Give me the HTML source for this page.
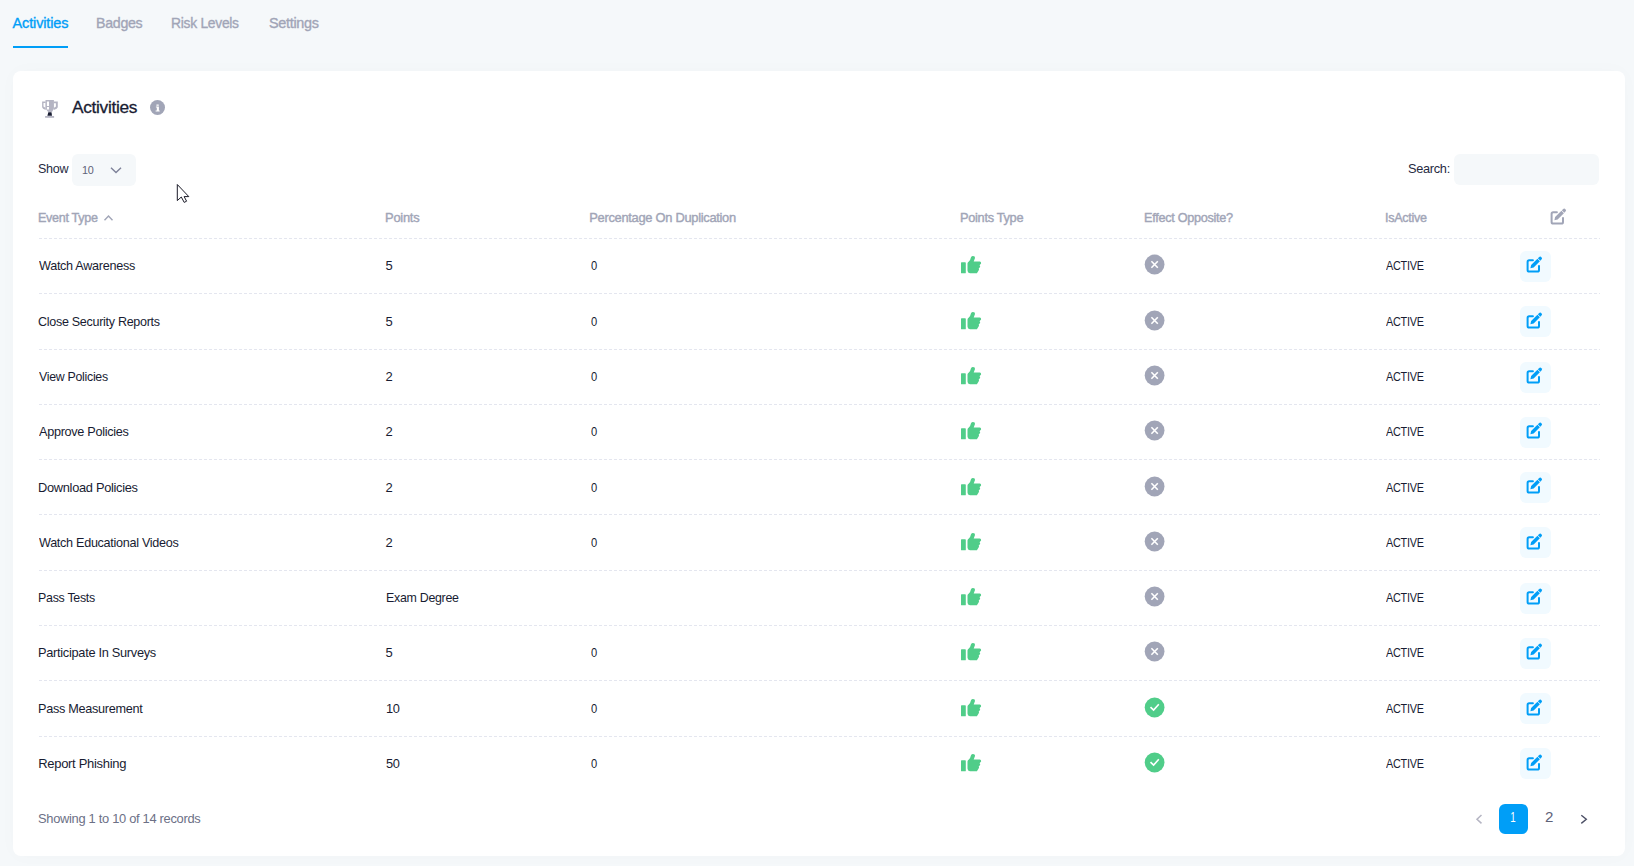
<!DOCTYPE html><html><head><meta charset="utf-8"><style>
html,body{margin:0;padding:0}
body{width:1634px;height:866px;background:#f5f8fa;position:relative;overflow:hidden;font-family:"Liberation Sans",sans-serif}
.t{position:absolute;white-space:pre;font-family:"Liberation Sans",sans-serif}
.a{position:absolute;display:block}
.card{position:absolute;left:13px;top:71px;width:1612px;height:785px;background:#fff;border-radius:8px;box-shadow:0 0 20px 0 rgba(76,87,125,0.02)}
.dash{position:absolute;left:39px;width:1561px;height:1px;background-image:linear-gradient(to right,#e4e6ef 0,#e4e6ef 3px,transparent 3px,transparent 5px);background-size:5px 1px}
.ebtn{position:absolute;width:31px;height:31px;background:#f1faff;border-radius:6px}
</style></head><body>
<div class="a" style="left:13px;top:46px;width:55px;height:2px;background:#009ef7"></div>
<div class="card"></div>
<svg class="a" style="left:38px;top:96px" width="24" height="24" viewBox="0 0 24 24">
<path fill="#b5b5c3" fill-rule="evenodd" d="M7.5 4.1 H15.9 V12.4 L14 15.9 H10.1 L7.5 12.4 Z M8.9 5.5 V9.9 H11 V5.5 Z M8.9 11 V13.5 H11 V11 Z"/>
<path fill="#b5b5c3" fill-rule="evenodd" d="M7.7 5.5 H4.1 V11.2 Q4.3 12.6 7.7 14 Z M5.5 7.1 H7.5 V11.7 Q5.7 11 5.5 10.5 Z"/>
<path fill="#b5b5c3" fill-rule="evenodd" d="M15.7 5.5 H19.8 V11.2 Q19.6 12.6 15.7 14 Z M15.9 7.3 H17.9 V10.5 Q17.7 11 15.9 11.7 Z"/>
<path fill="#181c32" d="M10.3 16.2 H13.5 L14 19.8 H9.4 Z"/>
<rect fill="#b5b5c3" x="7.1" y="20" width="9" height="1.8"/>
</svg>
<svg class="a" style="left:150px;top:99.5px" width="15" height="15" viewBox="0 0 15 15">
<circle cx="7.5" cy="7.5" r="7.5" fill="#a1a5b7"/>
<rect x="6.4" y="4.4" width="2.4" height="1.4" rx="0.3" fill="#fff"/>
<path d="M5.9 6.6 H8.9 V10.6 H9.7 V11.6 H5.6 V10.6 H6.8 V7.6 H5.9 Z" fill="#fff"/>
</svg>
<div class="a" style="left:72px;top:154px;width:64px;height:32px;background:#f5f8fa;border-radius:6px"></div>
<svg class="a" style="left:0;top:0" width="200" height="230"><polyline points="111,167.8 116,172.6 121,167.8" fill="none" stroke="#7e8299" stroke-width="1.4"/><polyline points="104.5,220.2 108.5,216 112.5,220.2" fill="none" stroke="#a1a5b7" stroke-width="1.4"/></svg>
<div class="a" style="left:1454px;top:154px;width:145px;height:31px;background:#f5f8fa;border-radius:6px"></div>
<svg class="a" style="left:1549.6px;top:208.6px;overflow:visible" width="17" height="17" viewBox="0 0 17 17">
<path d="M6.9 3.3 H3.2 Q1.6 3.3 1.6 4.9 V13 Q1.6 14.6 3.2 14.6 H11.4 Q13 14.6 13 13 V9" fill="none" stroke="#a1a5b7" stroke-width="2" stroke-linecap="round"/>
<path d="M4.4 11.2 L5.13 7.99 L11.42 1.7 L13.9 4.18 L7.61 10.47 Z" fill="#a1a5b7"/>
<path d="M11.84 1.28 L12.98 0.14 A1.75 1.75 0 0 1 15.46 2.62 L14.32 3.76 Z" fill="#a1a5b7"/>
</svg>
<div class="dash" style="top:238px"></div>
<div class="dash" style="top:293px"></div>
<div class="dash" style="top:349px"></div>
<div class="dash" style="top:404px"></div>
<div class="dash" style="top:459px"></div>
<div class="dash" style="top:514px"></div>
<div class="dash" style="top:570px"></div>
<div class="dash" style="top:625px"></div>
<div class="dash" style="top:680px"></div>
<div class="dash" style="top:736px"></div>
<svg class="a" style="left:961px;top:255.70px" width="21" height="18" viewBox="0 0 21 18">
<rect x="0" y="6.3" width="4.8" height="11" rx="0.6" fill="#50cd89"/>
<path fill="#50cd89" d="M10 1.2 Q10.6 0 12 0 Q14.3 0 14 2 L12.7 5.4 L18.8 5.4 Q20.3 5.6 20.1 7.4 L18.5 9.3 Q19.4 10 19.1 10.9 L17.7 12.6 Q18.2 13.3 17.9 14 L15.9 17.3 L9 17.3 Q6.5 17.1 6.5 14.6 L6.5 7.6 Q6.6 6.6 7.6 5.8 Q9.4 4.3 10 1.2 Z"/>
</svg>
<svg class="a" style="left:1144px;top:253.80px" width="21" height="21" viewBox="0 0 21 21">
<circle cx="10.6" cy="10.5" r="9.9" fill="#a1a5b7"/>
<path d="M7.4 7.3 L13.8 13.7 M13.8 7.3 L7.4 13.7" fill="none" stroke="#fff" stroke-width="1.6"/>
</svg>
<div class="ebtn" style="left:1520px;top:250.60px"></div>
<svg class="a" style="left:1526px;top:257.1px;overflow:visible" width="17" height="17" viewBox="0 0 17 17">
<path d="M6.9 3.3 H3.2 Q1.6 3.3 1.6 4.9 V13 Q1.6 14.6 3.2 14.6 H11.4 Q13 14.6 13 13 V9" fill="none" stroke="#009ef7" stroke-width="2" stroke-linecap="round"/>
<path d="M4.4 11.2 L5.13 7.99 L11.42 1.7 L13.9 4.18 L7.61 10.47 Z" fill="#009ef7"/>
<path d="M11.84 1.28 L12.98 0.14 A1.75 1.75 0 0 1 15.46 2.62 L14.32 3.76 Z" fill="#009ef7"/>
</svg>
<svg class="a" style="left:961px;top:311.70px" width="21" height="18" viewBox="0 0 21 18">
<rect x="0" y="6.3" width="4.8" height="11" rx="0.6" fill="#50cd89"/>
<path fill="#50cd89" d="M10 1.2 Q10.6 0 12 0 Q14.3 0 14 2 L12.7 5.4 L18.8 5.4 Q20.3 5.6 20.1 7.4 L18.5 9.3 Q19.4 10 19.1 10.9 L17.7 12.6 Q18.2 13.3 17.9 14 L15.9 17.3 L9 17.3 Q6.5 17.1 6.5 14.6 L6.5 7.6 Q6.6 6.6 7.6 5.8 Q9.4 4.3 10 1.2 Z"/>
</svg>
<svg class="a" style="left:1144px;top:309.80px" width="21" height="21" viewBox="0 0 21 21">
<circle cx="10.6" cy="10.5" r="9.9" fill="#a1a5b7"/>
<path d="M7.4 7.3 L13.8 13.7 M13.8 7.3 L7.4 13.7" fill="none" stroke="#fff" stroke-width="1.6"/>
</svg>
<div class="ebtn" style="left:1520px;top:306.10px"></div>
<svg class="a" style="left:1526px;top:312.6px;overflow:visible" width="17" height="17" viewBox="0 0 17 17">
<path d="M6.9 3.3 H3.2 Q1.6 3.3 1.6 4.9 V13 Q1.6 14.6 3.2 14.6 H11.4 Q13 14.6 13 13 V9" fill="none" stroke="#009ef7" stroke-width="2" stroke-linecap="round"/>
<path d="M4.4 11.2 L5.13 7.99 L11.42 1.7 L13.9 4.18 L7.61 10.47 Z" fill="#009ef7"/>
<path d="M11.84 1.28 L12.98 0.14 A1.75 1.75 0 0 1 15.46 2.62 L14.32 3.76 Z" fill="#009ef7"/>
</svg>
<svg class="a" style="left:961px;top:366.70px" width="21" height="18" viewBox="0 0 21 18">
<rect x="0" y="6.3" width="4.8" height="11" rx="0.6" fill="#50cd89"/>
<path fill="#50cd89" d="M10 1.2 Q10.6 0 12 0 Q14.3 0 14 2 L12.7 5.4 L18.8 5.4 Q20.3 5.6 20.1 7.4 L18.5 9.3 Q19.4 10 19.1 10.9 L17.7 12.6 Q18.2 13.3 17.9 14 L15.9 17.3 L9 17.3 Q6.5 17.1 6.5 14.6 L6.5 7.6 Q6.6 6.6 7.6 5.8 Q9.4 4.3 10 1.2 Z"/>
</svg>
<svg class="a" style="left:1144px;top:364.80px" width="21" height="21" viewBox="0 0 21 21">
<circle cx="10.6" cy="10.5" r="9.9" fill="#a1a5b7"/>
<path d="M7.4 7.3 L13.8 13.7 M13.8 7.3 L7.4 13.7" fill="none" stroke="#fff" stroke-width="1.6"/>
</svg>
<div class="ebtn" style="left:1520px;top:361.60px"></div>
<svg class="a" style="left:1526px;top:368.1px;overflow:visible" width="17" height="17" viewBox="0 0 17 17">
<path d="M6.9 3.3 H3.2 Q1.6 3.3 1.6 4.9 V13 Q1.6 14.6 3.2 14.6 H11.4 Q13 14.6 13 13 V9" fill="none" stroke="#009ef7" stroke-width="2" stroke-linecap="round"/>
<path d="M4.4 11.2 L5.13 7.99 L11.42 1.7 L13.9 4.18 L7.61 10.47 Z" fill="#009ef7"/>
<path d="M11.84 1.28 L12.98 0.14 A1.75 1.75 0 0 1 15.46 2.62 L14.32 3.76 Z" fill="#009ef7"/>
</svg>
<svg class="a" style="left:961px;top:421.70px" width="21" height="18" viewBox="0 0 21 18">
<rect x="0" y="6.3" width="4.8" height="11" rx="0.6" fill="#50cd89"/>
<path fill="#50cd89" d="M10 1.2 Q10.6 0 12 0 Q14.3 0 14 2 L12.7 5.4 L18.8 5.4 Q20.3 5.6 20.1 7.4 L18.5 9.3 Q19.4 10 19.1 10.9 L17.7 12.6 Q18.2 13.3 17.9 14 L15.9 17.3 L9 17.3 Q6.5 17.1 6.5 14.6 L6.5 7.6 Q6.6 6.6 7.6 5.8 Q9.4 4.3 10 1.2 Z"/>
</svg>
<svg class="a" style="left:1144px;top:419.80px" width="21" height="21" viewBox="0 0 21 21">
<circle cx="10.6" cy="10.5" r="9.9" fill="#a1a5b7"/>
<path d="M7.4 7.3 L13.8 13.7 M13.8 7.3 L7.4 13.7" fill="none" stroke="#fff" stroke-width="1.6"/>
</svg>
<div class="ebtn" style="left:1520px;top:416.60px"></div>
<svg class="a" style="left:1526px;top:423.1px;overflow:visible" width="17" height="17" viewBox="0 0 17 17">
<path d="M6.9 3.3 H3.2 Q1.6 3.3 1.6 4.9 V13 Q1.6 14.6 3.2 14.6 H11.4 Q13 14.6 13 13 V9" fill="none" stroke="#009ef7" stroke-width="2" stroke-linecap="round"/>
<path d="M4.4 11.2 L5.13 7.99 L11.42 1.7 L13.9 4.18 L7.61 10.47 Z" fill="#009ef7"/>
<path d="M11.84 1.28 L12.98 0.14 A1.75 1.75 0 0 1 15.46 2.62 L14.32 3.76 Z" fill="#009ef7"/>
</svg>
<svg class="a" style="left:961px;top:477.70px" width="21" height="18" viewBox="0 0 21 18">
<rect x="0" y="6.3" width="4.8" height="11" rx="0.6" fill="#50cd89"/>
<path fill="#50cd89" d="M10 1.2 Q10.6 0 12 0 Q14.3 0 14 2 L12.7 5.4 L18.8 5.4 Q20.3 5.6 20.1 7.4 L18.5 9.3 Q19.4 10 19.1 10.9 L17.7 12.6 Q18.2 13.3 17.9 14 L15.9 17.3 L9 17.3 Q6.5 17.1 6.5 14.6 L6.5 7.6 Q6.6 6.6 7.6 5.8 Q9.4 4.3 10 1.2 Z"/>
</svg>
<svg class="a" style="left:1144px;top:475.80px" width="21" height="21" viewBox="0 0 21 21">
<circle cx="10.6" cy="10.5" r="9.9" fill="#a1a5b7"/>
<path d="M7.4 7.3 L13.8 13.7 M13.8 7.3 L7.4 13.7" fill="none" stroke="#fff" stroke-width="1.6"/>
</svg>
<div class="ebtn" style="left:1520px;top:471.60px"></div>
<svg class="a" style="left:1526px;top:478.1px;overflow:visible" width="17" height="17" viewBox="0 0 17 17">
<path d="M6.9 3.3 H3.2 Q1.6 3.3 1.6 4.9 V13 Q1.6 14.6 3.2 14.6 H11.4 Q13 14.6 13 13 V9" fill="none" stroke="#009ef7" stroke-width="2" stroke-linecap="round"/>
<path d="M4.4 11.2 L5.13 7.99 L11.42 1.7 L13.9 4.18 L7.61 10.47 Z" fill="#009ef7"/>
<path d="M11.84 1.28 L12.98 0.14 A1.75 1.75 0 0 1 15.46 2.62 L14.32 3.76 Z" fill="#009ef7"/>
</svg>
<svg class="a" style="left:961px;top:532.70px" width="21" height="18" viewBox="0 0 21 18">
<rect x="0" y="6.3" width="4.8" height="11" rx="0.6" fill="#50cd89"/>
<path fill="#50cd89" d="M10 1.2 Q10.6 0 12 0 Q14.3 0 14 2 L12.7 5.4 L18.8 5.4 Q20.3 5.6 20.1 7.4 L18.5 9.3 Q19.4 10 19.1 10.9 L17.7 12.6 Q18.2 13.3 17.9 14 L15.9 17.3 L9 17.3 Q6.5 17.1 6.5 14.6 L6.5 7.6 Q6.6 6.6 7.6 5.8 Q9.4 4.3 10 1.2 Z"/>
</svg>
<svg class="a" style="left:1144px;top:530.80px" width="21" height="21" viewBox="0 0 21 21">
<circle cx="10.6" cy="10.5" r="9.9" fill="#a1a5b7"/>
<path d="M7.4 7.3 L13.8 13.7 M13.8 7.3 L7.4 13.7" fill="none" stroke="#fff" stroke-width="1.6"/>
</svg>
<div class="ebtn" style="left:1520px;top:527.10px"></div>
<svg class="a" style="left:1526px;top:533.6px;overflow:visible" width="17" height="17" viewBox="0 0 17 17">
<path d="M6.9 3.3 H3.2 Q1.6 3.3 1.6 4.9 V13 Q1.6 14.6 3.2 14.6 H11.4 Q13 14.6 13 13 V9" fill="none" stroke="#009ef7" stroke-width="2" stroke-linecap="round"/>
<path d="M4.4 11.2 L5.13 7.99 L11.42 1.7 L13.9 4.18 L7.61 10.47 Z" fill="#009ef7"/>
<path d="M11.84 1.28 L12.98 0.14 A1.75 1.75 0 0 1 15.46 2.62 L14.32 3.76 Z" fill="#009ef7"/>
</svg>
<svg class="a" style="left:961px;top:587.70px" width="21" height="18" viewBox="0 0 21 18">
<rect x="0" y="6.3" width="4.8" height="11" rx="0.6" fill="#50cd89"/>
<path fill="#50cd89" d="M10 1.2 Q10.6 0 12 0 Q14.3 0 14 2 L12.7 5.4 L18.8 5.4 Q20.3 5.6 20.1 7.4 L18.5 9.3 Q19.4 10 19.1 10.9 L17.7 12.6 Q18.2 13.3 17.9 14 L15.9 17.3 L9 17.3 Q6.5 17.1 6.5 14.6 L6.5 7.6 Q6.6 6.6 7.6 5.8 Q9.4 4.3 10 1.2 Z"/>
</svg>
<svg class="a" style="left:1144px;top:585.80px" width="21" height="21" viewBox="0 0 21 21">
<circle cx="10.6" cy="10.5" r="9.9" fill="#a1a5b7"/>
<path d="M7.4 7.3 L13.8 13.7 M13.8 7.3 L7.4 13.7" fill="none" stroke="#fff" stroke-width="1.6"/>
</svg>
<div class="ebtn" style="left:1520px;top:582.60px"></div>
<svg class="a" style="left:1526px;top:589.1px;overflow:visible" width="17" height="17" viewBox="0 0 17 17">
<path d="M6.9 3.3 H3.2 Q1.6 3.3 1.6 4.9 V13 Q1.6 14.6 3.2 14.6 H11.4 Q13 14.6 13 13 V9" fill="none" stroke="#009ef7" stroke-width="2" stroke-linecap="round"/>
<path d="M4.4 11.2 L5.13 7.99 L11.42 1.7 L13.9 4.18 L7.61 10.47 Z" fill="#009ef7"/>
<path d="M11.84 1.28 L12.98 0.14 A1.75 1.75 0 0 1 15.46 2.62 L14.32 3.76 Z" fill="#009ef7"/>
</svg>
<svg class="a" style="left:961px;top:642.70px" width="21" height="18" viewBox="0 0 21 18">
<rect x="0" y="6.3" width="4.8" height="11" rx="0.6" fill="#50cd89"/>
<path fill="#50cd89" d="M10 1.2 Q10.6 0 12 0 Q14.3 0 14 2 L12.7 5.4 L18.8 5.4 Q20.3 5.6 20.1 7.4 L18.5 9.3 Q19.4 10 19.1 10.9 L17.7 12.6 Q18.2 13.3 17.9 14 L15.9 17.3 L9 17.3 Q6.5 17.1 6.5 14.6 L6.5 7.6 Q6.6 6.6 7.6 5.8 Q9.4 4.3 10 1.2 Z"/>
</svg>
<svg class="a" style="left:1144px;top:640.80px" width="21" height="21" viewBox="0 0 21 21">
<circle cx="10.6" cy="10.5" r="9.9" fill="#a1a5b7"/>
<path d="M7.4 7.3 L13.8 13.7 M13.8 7.3 L7.4 13.7" fill="none" stroke="#fff" stroke-width="1.6"/>
</svg>
<div class="ebtn" style="left:1520px;top:637.60px"></div>
<svg class="a" style="left:1526px;top:644.1px;overflow:visible" width="17" height="17" viewBox="0 0 17 17">
<path d="M6.9 3.3 H3.2 Q1.6 3.3 1.6 4.9 V13 Q1.6 14.6 3.2 14.6 H11.4 Q13 14.6 13 13 V9" fill="none" stroke="#009ef7" stroke-width="2" stroke-linecap="round"/>
<path d="M4.4 11.2 L5.13 7.99 L11.42 1.7 L13.9 4.18 L7.61 10.47 Z" fill="#009ef7"/>
<path d="M11.84 1.28 L12.98 0.14 A1.75 1.75 0 0 1 15.46 2.62 L14.32 3.76 Z" fill="#009ef7"/>
</svg>
<svg class="a" style="left:961px;top:698.70px" width="21" height="18" viewBox="0 0 21 18">
<rect x="0" y="6.3" width="4.8" height="11" rx="0.6" fill="#50cd89"/>
<path fill="#50cd89" d="M10 1.2 Q10.6 0 12 0 Q14.3 0 14 2 L12.7 5.4 L18.8 5.4 Q20.3 5.6 20.1 7.4 L18.5 9.3 Q19.4 10 19.1 10.9 L17.7 12.6 Q18.2 13.3 17.9 14 L15.9 17.3 L9 17.3 Q6.5 17.1 6.5 14.6 L6.5 7.6 Q6.6 6.6 7.6 5.8 Q9.4 4.3 10 1.2 Z"/>
</svg>
<svg class="a" style="left:1144px;top:696.80px" width="21" height="21" viewBox="0 0 21 21">
<circle cx="10.6" cy="10.5" r="9.9" fill="#50cd89"/>
<polyline points="6.5,10.1 9.6,13.1 14.8,7.3" fill="none" stroke="#fff" stroke-width="1.6"/>
</svg>
<div class="ebtn" style="left:1520px;top:693.10px"></div>
<svg class="a" style="left:1526px;top:699.6px;overflow:visible" width="17" height="17" viewBox="0 0 17 17">
<path d="M6.9 3.3 H3.2 Q1.6 3.3 1.6 4.9 V13 Q1.6 14.6 3.2 14.6 H11.4 Q13 14.6 13 13 V9" fill="none" stroke="#009ef7" stroke-width="2" stroke-linecap="round"/>
<path d="M4.4 11.2 L5.13 7.99 L11.42 1.7 L13.9 4.18 L7.61 10.47 Z" fill="#009ef7"/>
<path d="M11.84 1.28 L12.98 0.14 A1.75 1.75 0 0 1 15.46 2.62 L14.32 3.76 Z" fill="#009ef7"/>
</svg>
<svg class="a" style="left:961px;top:753.70px" width="21" height="18" viewBox="0 0 21 18">
<rect x="0" y="6.3" width="4.8" height="11" rx="0.6" fill="#50cd89"/>
<path fill="#50cd89" d="M10 1.2 Q10.6 0 12 0 Q14.3 0 14 2 L12.7 5.4 L18.8 5.4 Q20.3 5.6 20.1 7.4 L18.5 9.3 Q19.4 10 19.1 10.9 L17.7 12.6 Q18.2 13.3 17.9 14 L15.9 17.3 L9 17.3 Q6.5 17.1 6.5 14.6 L6.5 7.6 Q6.6 6.6 7.6 5.8 Q9.4 4.3 10 1.2 Z"/>
</svg>
<svg class="a" style="left:1144px;top:751.80px" width="21" height="21" viewBox="0 0 21 21">
<circle cx="10.6" cy="10.5" r="9.9" fill="#50cd89"/>
<polyline points="6.5,10.1 9.6,13.1 14.8,7.3" fill="none" stroke="#fff" stroke-width="1.6"/>
</svg>
<div class="ebtn" style="left:1520px;top:748.10px"></div>
<svg class="a" style="left:1526px;top:754.6px;overflow:visible" width="17" height="17" viewBox="0 0 17 17">
<path d="M6.9 3.3 H3.2 Q1.6 3.3 1.6 4.9 V13 Q1.6 14.6 3.2 14.6 H11.4 Q13 14.6 13 13 V9" fill="none" stroke="#009ef7" stroke-width="2" stroke-linecap="round"/>
<path d="M4.4 11.2 L5.13 7.99 L11.42 1.7 L13.9 4.18 L7.61 10.47 Z" fill="#009ef7"/>
<path d="M11.84 1.28 L12.98 0.14 A1.75 1.75 0 0 1 15.46 2.62 L14.32 3.76 Z" fill="#009ef7"/>
</svg>
<div class="a" style="left:1499px;top:804px;width:29px;height:30px;background:#009ef7;border-radius:6px"></div>
<svg class="a" style="left:1460px;top:800px" width="140" height="40"><polyline points="21.5,15 17,19.2 21.5,23.4" fill="none" stroke="#b5b5c3" stroke-width="1.5"/><polyline points="121.3,15.2 126.3,19.3 121.3,23.4" fill="none" stroke="#4b4f65" stroke-width="1.4"/></svg>
<div class="t" style="left:12.60px;top:16.00px;font-size:14.5px;line-height:14.5px;color:#009ef7;letter-spacing:-0.156px;-webkit-text-stroke:0.35px #009ef7">Activities</div>
<div class="t" style="left:96.30px;top:16.00px;font-size:14.5px;line-height:14.5px;color:#a1a5b7;letter-spacing:-0.300px;transform:scaleX(0.9785);transform-origin:1px 0;-webkit-text-stroke:0.35px #a1a5b7">Badges</div>
<div class="t" style="left:171.30px;top:16.00px;font-size:14.5px;line-height:14.5px;color:#a1a5b7;letter-spacing:-0.300px;transform:scaleX(0.9557);transform-origin:1px 0;-webkit-text-stroke:0.35px #a1a5b7">Risk Levels</div>
<div class="t" style="left:268.70px;top:16.00px;font-size:14.5px;line-height:14.5px;color:#a1a5b7;letter-spacing:-0.300px;transform:scaleX(0.9940);transform-origin:0px 0;-webkit-text-stroke:0.35px #a1a5b7">Settings</div>
<div class="t" style="left:72.40px;top:99.10px;font-size:17.4px;line-height:17.4px;color:#181c32;letter-spacing:-0.300px;transform:scaleX(0.9939);transform-origin:0px 0;-webkit-text-stroke:0.3px #181c32">Activities</div>
<div class="t" style="left:38.20px;top:163.10px;font-size:12.9px;line-height:12.9px;color:#262a3f;letter-spacing:-0.300px;transform:scaleX(0.9734);transform-origin:1px 0">Show</div>
<div class="t" style="left:81.50px;top:164.90px;font-size:11.5px;line-height:11.5px;color:#5e6278;letter-spacing:-0.300px;transform:scaleX(0.9402);transform-origin:1px 0">10</div>
<div class="t" style="left:1407.90px;top:162.90px;font-size:12.9px;line-height:12.9px;color:#262a3f;letter-spacing:-0.300px;transform:scaleX(0.9900);transform-origin:1px 0">Search:</div>
<div class="t" style="left:38.20px;top:212.20px;font-size:12.9px;line-height:12.9px;color:#a1a5b7;letter-spacing:-0.300px;transform:scaleX(0.9735);transform-origin:1px 0;-webkit-text-stroke:0.4px #a1a5b7">Event Type</div>
<div class="t" style="left:385.10px;top:212.20px;font-size:12.9px;line-height:12.9px;color:#a1a5b7;letter-spacing:-0.260px;-webkit-text-stroke:0.4px #a1a5b7">Points</div>
<div class="t" style="left:589.30px;top:212.20px;font-size:12.9px;line-height:12.9px;color:#a1a5b7;letter-spacing:-0.300px;-webkit-text-stroke:0.4px #a1a5b7">Percentage On Duplication</div>
<div class="t" style="left:960.40px;top:212.20px;font-size:12.9px;line-height:12.9px;color:#a1a5b7;letter-spacing:-0.300px;transform:scaleX(0.9905);transform-origin:1px 0;-webkit-text-stroke:0.4px #a1a5b7">Points Type</div>
<div class="t" style="left:1144.00px;top:212.20px;font-size:12.9px;line-height:12.9px;color:#a1a5b7;letter-spacing:-0.300px;transform:scaleX(0.9844);transform-origin:1px 0;-webkit-text-stroke:0.4px #a1a5b7">Effect Opposite?</div>
<div class="t" style="left:1385.10px;top:212.20px;font-size:12.9px;line-height:12.9px;color:#a1a5b7;letter-spacing:-0.300px;transform:scaleX(0.9761);transform-origin:1px 0;-webkit-text-stroke:0.4px #a1a5b7">IsActive</div>
<div class="t" style="left:39.20px;top:259.00px;font-size:13.0px;line-height:13.0px;color:#181c32;letter-spacing:-0.300px;transform:scaleX(0.9706);transform-origin:0px 0">Watch Awareness</div>
<div class="t" style="left:385.50px;top:259.00px;font-size:13.0px;line-height:13.0px;color:#181c32;letter-spacing:0.000px">5</div>
<div class="t" style="left:590.80px;top:259.00px;font-size:13.0px;line-height:13.0px;color:#181c32;letter-spacing:0.000px;transform:scaleX(0.8571);transform-origin:0px 0">0</div>
<div class="t" style="left:1385.90px;top:259.00px;font-size:13.0px;line-height:13.0px;color:#181c32;letter-spacing:-0.300px;transform:scaleX(0.8352);transform-origin:0px 0">ACTIVE</div>
<div class="t" style="left:38.20px;top:315.00px;font-size:13.0px;line-height:13.0px;color:#181c32;letter-spacing:-0.300px;transform:scaleX(0.9634);transform-origin:1px 0">Close Security Reports</div>
<div class="t" style="left:385.50px;top:315.00px;font-size:13.0px;line-height:13.0px;color:#181c32;letter-spacing:0.000px">5</div>
<div class="t" style="left:590.80px;top:315.00px;font-size:13.0px;line-height:13.0px;color:#181c32;letter-spacing:0.000px;transform:scaleX(0.8571);transform-origin:0px 0">0</div>
<div class="t" style="left:1385.90px;top:315.00px;font-size:13.0px;line-height:13.0px;color:#181c32;letter-spacing:-0.300px;transform:scaleX(0.8352);transform-origin:0px 0">ACTIVE</div>
<div class="t" style="left:39.20px;top:370.00px;font-size:13.0px;line-height:13.0px;color:#181c32;letter-spacing:-0.300px;transform:scaleX(0.9503);transform-origin:0px 0">View Policies</div>
<div class="t" style="left:385.50px;top:370.00px;font-size:13.0px;line-height:13.0px;color:#181c32;letter-spacing:0.000px">2</div>
<div class="t" style="left:590.80px;top:370.00px;font-size:13.0px;line-height:13.0px;color:#181c32;letter-spacing:0.000px;transform:scaleX(0.8571);transform-origin:0px 0">0</div>
<div class="t" style="left:1385.90px;top:370.00px;font-size:13.0px;line-height:13.0px;color:#181c32;letter-spacing:-0.300px;transform:scaleX(0.8352);transform-origin:0px 0">ACTIVE</div>
<div class="t" style="left:39.20px;top:425.00px;font-size:13.0px;line-height:13.0px;color:#181c32;letter-spacing:-0.300px;transform:scaleX(0.9738);transform-origin:0px 0">Approve Policies</div>
<div class="t" style="left:385.50px;top:425.00px;font-size:13.0px;line-height:13.0px;color:#181c32;letter-spacing:0.000px">2</div>
<div class="t" style="left:590.80px;top:425.00px;font-size:13.0px;line-height:13.0px;color:#181c32;letter-spacing:0.000px;transform:scaleX(0.8571);transform-origin:0px 0">0</div>
<div class="t" style="left:1385.90px;top:425.00px;font-size:13.0px;line-height:13.0px;color:#181c32;letter-spacing:-0.300px;transform:scaleX(0.8352);transform-origin:0px 0">ACTIVE</div>
<div class="t" style="left:38.20px;top:481.00px;font-size:13.0px;line-height:13.0px;color:#181c32;letter-spacing:-0.300px;transform:scaleX(0.9860);transform-origin:1px 0">Download Policies</div>
<div class="t" style="left:385.50px;top:481.00px;font-size:13.0px;line-height:13.0px;color:#181c32;letter-spacing:0.000px">2</div>
<div class="t" style="left:590.80px;top:481.00px;font-size:13.0px;line-height:13.0px;color:#181c32;letter-spacing:0.000px;transform:scaleX(0.8571);transform-origin:0px 0">0</div>
<div class="t" style="left:1385.90px;top:481.00px;font-size:13.0px;line-height:13.0px;color:#181c32;letter-spacing:-0.300px;transform:scaleX(0.8352);transform-origin:0px 0">ACTIVE</div>
<div class="t" style="left:39.20px;top:536.00px;font-size:13.0px;line-height:13.0px;color:#181c32;letter-spacing:-0.300px;transform:scaleX(0.9702);transform-origin:0px 0">Watch Educational Videos</div>
<div class="t" style="left:385.50px;top:536.00px;font-size:13.0px;line-height:13.0px;color:#181c32;letter-spacing:0.000px">2</div>
<div class="t" style="left:590.80px;top:536.00px;font-size:13.0px;line-height:13.0px;color:#181c32;letter-spacing:0.000px;transform:scaleX(0.8571);transform-origin:0px 0">0</div>
<div class="t" style="left:1385.90px;top:536.00px;font-size:13.0px;line-height:13.0px;color:#181c32;letter-spacing:-0.300px;transform:scaleX(0.8352);transform-origin:0px 0">ACTIVE</div>
<div class="t" style="left:38.20px;top:591.00px;font-size:13.0px;line-height:13.0px;color:#181c32;letter-spacing:-0.300px;transform:scaleX(0.9537);transform-origin:1px 0">Pass Tests</div>
<div class="t" style="left:385.70px;top:591.00px;font-size:13.0px;line-height:13.0px;color:#181c32;letter-spacing:-0.300px;transform:scaleX(0.9533);transform-origin:1px 0">Exam Degree</div>
<div class="t" style="left:1385.90px;top:591.00px;font-size:13.0px;line-height:13.0px;color:#181c32;letter-spacing:-0.300px;transform:scaleX(0.8352);transform-origin:0px 0">ACTIVE</div>
<div class="t" style="left:38.20px;top:646.00px;font-size:13.0px;line-height:13.0px;color:#181c32;letter-spacing:-0.300px;transform:scaleX(0.9840);transform-origin:1px 0">Participate In Surveys</div>
<div class="t" style="left:385.50px;top:646.00px;font-size:13.0px;line-height:13.0px;color:#181c32;letter-spacing:0.000px">5</div>
<div class="t" style="left:590.80px;top:646.00px;font-size:13.0px;line-height:13.0px;color:#181c32;letter-spacing:0.000px;transform:scaleX(0.8571);transform-origin:0px 0">0</div>
<div class="t" style="left:1385.90px;top:646.00px;font-size:13.0px;line-height:13.0px;color:#181c32;letter-spacing:-0.300px;transform:scaleX(0.8352);transform-origin:0px 0">ACTIVE</div>
<div class="t" style="left:38.20px;top:702.00px;font-size:13.0px;line-height:13.0px;color:#181c32;letter-spacing:-0.300px;transform:scaleX(0.9737);transform-origin:1px 0">Pass Measurement</div>
<div class="t" style="left:385.70px;top:702.00px;font-size:13.0px;line-height:13.0px;color:#181c32;letter-spacing:-0.300px;transform:scaleX(0.9843);transform-origin:1px 0">10</div>
<div class="t" style="left:590.80px;top:702.00px;font-size:13.0px;line-height:13.0px;color:#181c32;letter-spacing:0.000px;transform:scaleX(0.8571);transform-origin:0px 0">0</div>
<div class="t" style="left:1385.90px;top:702.00px;font-size:13.0px;line-height:13.0px;color:#181c32;letter-spacing:-0.300px;transform:scaleX(0.8352);transform-origin:0px 0">ACTIVE</div>
<div class="t" style="left:38.20px;top:757.00px;font-size:13.0px;line-height:13.0px;color:#181c32;letter-spacing:-0.300px">Report Phishing</div>
<div class="t" style="left:385.70px;top:757.00px;font-size:13.0px;line-height:13.0px;color:#181c32;letter-spacing:-0.300px;transform:scaleX(0.9843);transform-origin:1px 0">50</div>
<div class="t" style="left:590.80px;top:757.00px;font-size:13.0px;line-height:13.0px;color:#181c32;letter-spacing:0.000px;transform:scaleX(0.8571);transform-origin:0px 0">0</div>
<div class="t" style="left:1385.90px;top:757.00px;font-size:13.0px;line-height:13.0px;color:#181c32;letter-spacing:-0.300px;transform:scaleX(0.8352);transform-origin:0px 0">ACTIVE</div>
<div class="t" style="left:38.20px;top:812.20px;font-size:13.0px;line-height:13.0px;color:#6c7086;letter-spacing:-0.300px;transform:scaleX(0.9902);transform-origin:1px 0">Showing 1 to 10 of 14 records</div>
<div class="t" style="left:1510.40px;top:810.00px;font-size:14.5px;line-height:14.5px;color:#ffffff;letter-spacing:0.000px;transform:scaleX(0.6714);transform-origin:1px 0">1</div>
<div class="t" style="left:1544.70px;top:810.00px;font-size:14.5px;line-height:14.5px;color:#5e6278;letter-spacing:0.000px;transform:scaleX(1.0429);transform-origin:1px 0">2</div>
<svg class="a" style="left:170px;top:178px" width="30" height="30" viewBox="170 178 30 30"><path d="M177.3 184.5 L177.3 200.6 L181.3 197 L184.2 202.4 L186.6 201.2 L184.1 196.6 L188.8 196.6 Z" fill="#fff" stroke="#1b1b28" stroke-width="1.0" stroke-linejoin="round"/></svg>
</body></html>
